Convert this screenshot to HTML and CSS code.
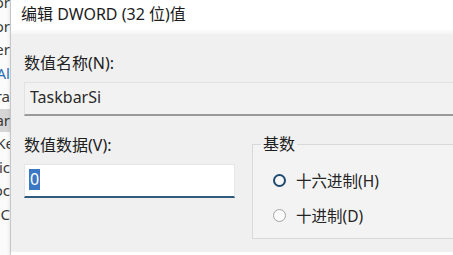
FILE: index.html
```html
<!DOCTYPE html>
<html lang="zh-CN">
<head>
<meta charset="utf-8">
<title>编辑 DWORD (32 位)值</title>
<link rel="stylesheet" href="styles.css">
</head>
<body>
<div class="screen">
  <div class="tree">
    <div class="item"><span>Color</span></div>
    <div class="item"><span>Moor</span></div>
    <div class="item"><span>User</span></div>
    <div class="item blue"><span>Al</span></div>
    <div class="item"><span>Extra</span></div>
    <div class="item sel"><span>Star</span></div>
    <div class="item cut"><span>Ke</span></div>
    <div class="item"><span>Pic</span></div>
    <div class="item"><span>Doc</span></div>
    <div class="item"><span>C</span></div>
  </div>
  <div class="dialog">
    <div class="titlebar">编辑 DWORD (32 位)值</div>
    <div class="body">
      <div class="label">数值名称(N):</div>
      <div class="field name">TaskbarSi</div>
      <div class="row">
        <div class="col">
          <div class="label">数值数据(V):</div>
          <div class="field data"><span class="selected">0</span></div>
        </div>
        <fieldset class="base">
          <legend>基数</legend>
          <div class="radios">
            <label class="radio"><span class="dot on"></span>十六进制(H)</label>
            <label class="radio"><span class="dot"></span>十进制(D)</label>
          </div>
        </fieldset>
      </div>
    </div>
    <div class="foot"></div>
  </div>
</div>
</body>
</html>
```
FILE: styles.css
```css
html, body {
  margin: 0;
  padding: 0;
  width: 453px;
  height: 255px;
  overflow: hidden;
  background: #ffffff;
}

.screen {
  display: flex;
  height: 255px;
  font-family: "Noto Sans", "Noto Sans CJK SC", sans-serif;
  color: #222222;
}

.tree {
  width: 10px;
  flex: none;
  overflow: hidden;
  background: #fbfbfb;
  border-right: 1px solid #d4d4d4;
}

.item {
  display: flex;
  justify-content: flex-end;
  height: 23.5px;
  line-height: 23.5px;
  font-size: 15px;
  color: #3a3a3a;
  white-space: nowrap;
}
.item:first-child { margin-top: -9px; }
.item.blue { color: #2d6fb6; }
.item.sel { background: #d6d6d6; }
.item.cut span { margin-right: -4px; }

.dialog {
  flex: 1;
  display: flex;
  flex-direction: column;
  min-width: 0;
  box-shadow: -2px 0 3px rgba(0, 0, 0, 0.08);
}

.titlebar {
  height: 34px;
  flex: none;
  box-sizing: border-box;
  padding-left: 10px;
  line-height: 29px;
  font-size: 16px;
  color: #1c1c1c;
  background: linear-gradient(#ffffff 0, #ffffff 29px, #f4f4f4 34px);
  white-space: nowrap;
}

.body {
  flex: 1;
  background: #f0f0f0;
  padding: 19px 0 0 13px;
  overflow: hidden;
}

.label {
  height: 20px;
  line-height: 20px;
  font-size: 16px;
  color: #202020;
  white-space: nowrap;
}

.field {
  box-sizing: border-box;
  height: 34px;
  margin-top: 9px;
  font-size: 16px;
  white-space: nowrap;
}

.field.name {
  margin-right: -20px;
  background: #f2f2f2;
  border: 1px solid #e2e2e2;
  border-bottom: 2px solid #9a9a9a;
  padding: 0 0 2px 5px;
  line-height: 29px;
  color: #2a2a2a;
}

.field.data {
  background: #ffffff;
  border: 1px solid #e6e6e6;
  border-bottom: 2px solid #2f5b7c;
  padding: 3px 0 0 4px;
}

.selected {
  display: inline-block;
  height: 21px;
  line-height: 21px;
  padding: 0 1px;
  background: #3b78c4;
  color: #ffffff;
}

.row {
  display: flex;
  align-items: flex-start;
  margin-top: 18px;
}

.col {
  width: 211px;
  flex: none;
  margin-top: 1px;
}

.base {
  flex: 1;
  margin: 0 -20px 0 17px;
  padding: 0 0 5px 8px;
  height: 105px;
  box-sizing: border-box;
  border: 1px solid #d9d9d9;
  background: #f3f3f3;
  min-width: 0;
}

.base legend {
  padding: 0 2px;
  height: 20px;
  line-height: 20px;
  font-size: 16px;
  color: #202020;
}

.radios {
  padding: 9px 0 0 12px;
}

.radio {
  display: flex;
  align-items: center;
  height: 35px;
  font-size: 15.5px;
  color: #242424;
  white-space: nowrap;
}

.dot {
  box-sizing: border-box;
  width: 13px;
  height: 13px;
  margin-right: 10px;
  border-radius: 50%;
  border: 1px solid #a4a4a4;
  background: #fafafa;
  flex: none;
}

.dot.on {
  border: 2.5px solid #1f4a70;
  background: #f7f7f7;
}

.foot {
  height: 3px;
  flex: none;
  background: #ffffff;
}
```
